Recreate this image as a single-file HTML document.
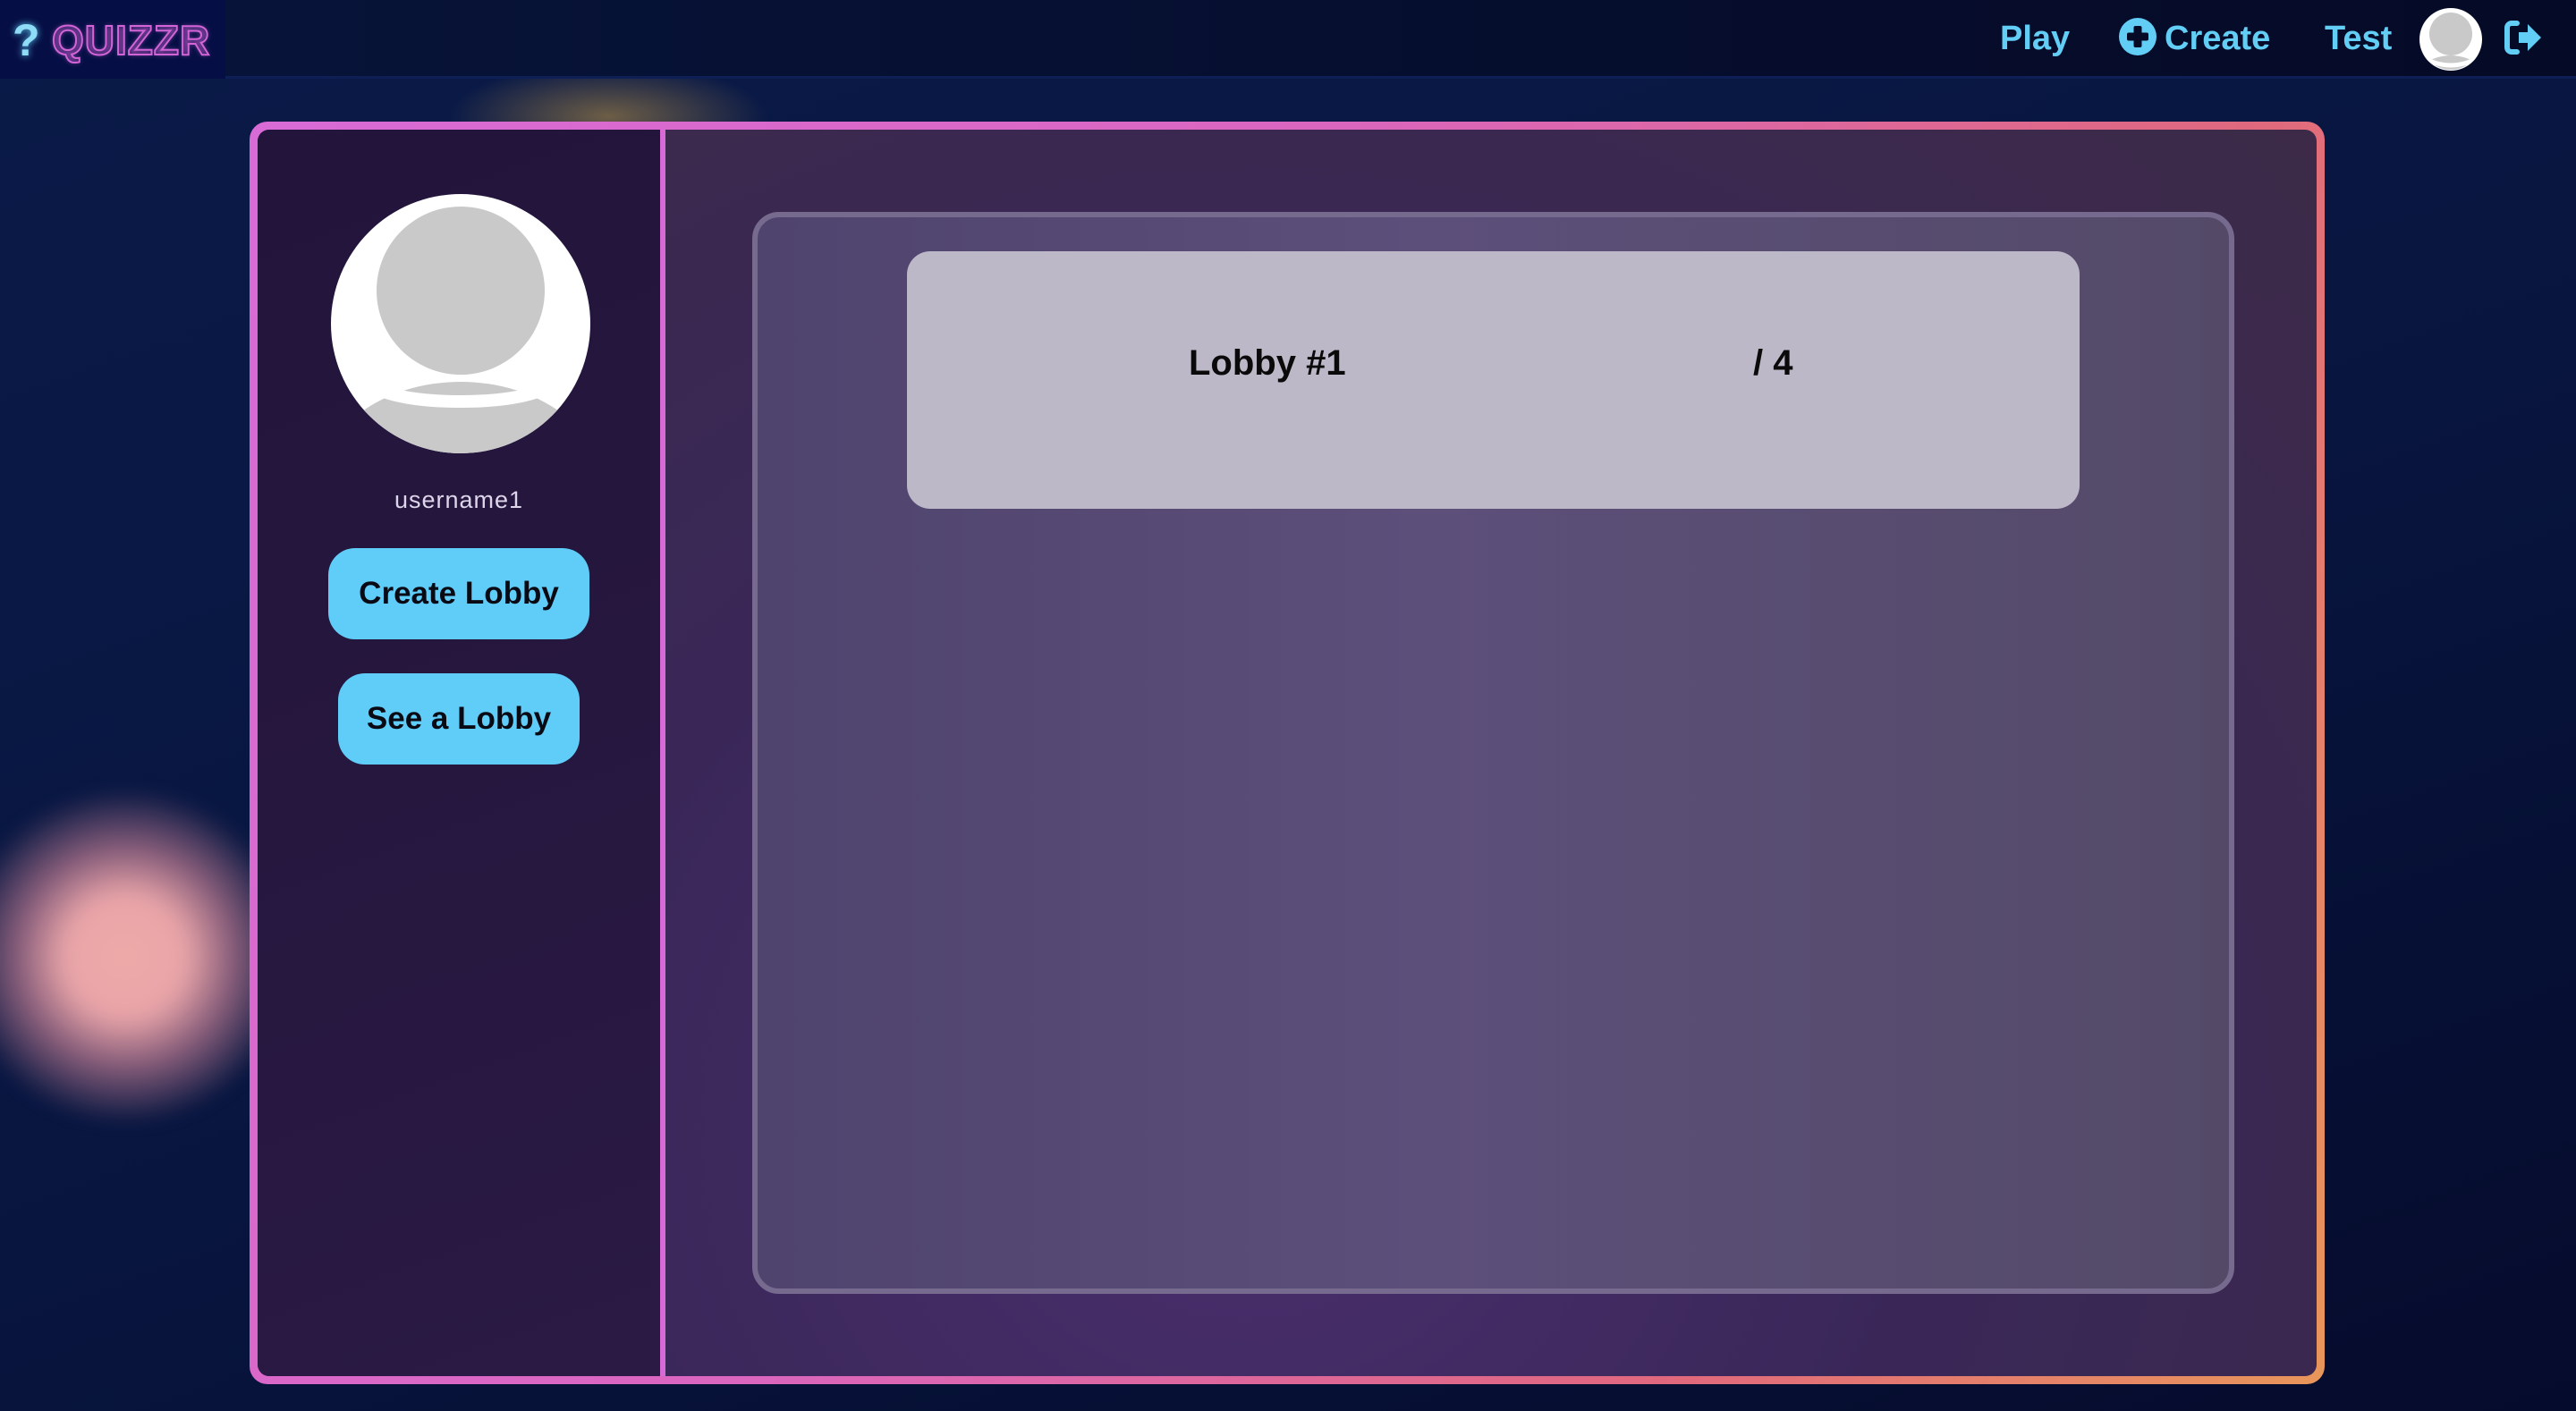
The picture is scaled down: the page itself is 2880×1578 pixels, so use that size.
<!DOCTYPE html>
<html><head><meta charset="utf-8"><style>
*{margin:0;padding:0;box-sizing:border-box}
body{width:2880px;height:1578px;overflow:hidden;font-family:"Liberation Sans",sans-serif;background:linear-gradient(160deg,#0a1a48 0%,#081640 50%,#050b2c 100%);position:relative}
.nav{position:absolute;left:0;top:0;width:2880px;height:88px;background:linear-gradient(90deg,#07143a,#050a26);border-bottom:3px solid #0d1f55}
.logo{position:absolute;left:0;top:0;width:252px;height:88px;background:#060f45}
.q{position:absolute;left:14px;top:16px;font-size:50px;font-weight:bold;color:#8fdcf7;text-shadow:0 0 8px #5cc8f0}
.qz{position:absolute;left:58px;top:18px;font-size:46px;font-weight:bold;color:transparent;-webkit-text-stroke:2px #d264d8;letter-spacing:1px;text-shadow:0 0 6px rgba(210,100,216,.6)}
.nl{position:absolute;top:22px;font-size:38px;font-weight:bold;color:#62cdf5}
.glow{position:absolute;border-radius:50%}
.frame{position:absolute;left:279px;top:136px;width:2320px;height:1412px;border-radius:20px;padding:9px;background:linear-gradient(115deg,#d86bd6 0%,#da66c0 40%,#e0687e 75%,#e8965a 100%);}
.in{position:relative;width:100%;height:100%;border-radius:13px;background:radial-gradient(ellipse at 48% 80%,#4a2f6e 0%,#3a2758 45%,#3c2a48 100%);overflow:hidden}
.side{position:absolute;left:0;top:0;width:456px;height:100%;background:linear-gradient(160deg,#22143a,#2a1a44);border-right:6px solid #d76bd6}
.panel{position:absolute;left:553px;top:92px;width:1657px;height:1210px;border:6px solid #766b8e;border-radius:30px;background:linear-gradient(90deg,#4f446e,#5c4f7a 45%,#544a68)}
.card{position:absolute;left:167px;top:38px;width:1311px;height:288px;background:#bdb8c7;border-radius:26px}
.btn{position:absolute;background:#5fcdf7;border-radius:30px;color:#0a0a14;font-weight:bold;font-size:35px;text-align:center}
</style></head><body>
<div class="glow" style="left:500px;top:70px;width:360px;height:120px;background:radial-gradient(ellipse,rgba(190,150,70,.55),rgba(190,150,70,0) 70%)"></div>
<div class="glow" style="left:-50px;top:880px;width:380px;height:380px;background:radial-gradient(circle,#eeaaa8 0%,#e8a4a8 25%,rgba(220,140,160,.6) 45%,rgba(200,120,150,0) 70%);filter:blur(10px)"></div>
<div class="nav">
<div class="logo"><span class="q">?</span><span class="qz">QUIZZR</span></div>
<span class="nl" style="left:2236px">Play</span>
<svg style="position:absolute;left:2369px;top:20px" width="42" height="42" viewBox="0 0 42 42"><circle cx="21" cy="21" r="21" fill="#62cdf5"/><rect x="16.5" y="9" width="9" height="24" rx="2" fill="#050a26"/><rect x="9" y="16.5" width="24" height="9" rx="2" fill="#050a26"/></svg>
<span class="nl" style="left:2420px">Create</span>
<span class="nl" style="left:2599px">Test</span>
<svg style="position:absolute;left:2704px;top:8px" width="72" height="72" viewBox="0 0 72 72"><defs><clipPath id="c1"><circle cx="36" cy="36" r="34"/></clipPath></defs><circle cx="36" cy="36" r="35" fill="#fff"/><g clip-path="url(#c1)"><circle cx="36" cy="30" r="24" fill="#c9c9c9"/><ellipse cx="36" cy="84" rx="40" ry="30" fill="#c9c9c9"/><path d="M4 56 Q36 74 68 56" stroke="#fff" stroke-width="5" fill="none"/></g></svg>
<svg style="position:absolute;left:2800px;top:22px" width="44" height="40" viewBox="0 0 44 40"><path d="M14 4H8a5 5 0 0 0-5 5v22a5 5 0 0 0 5 5h6" stroke="#62cdf5" stroke-width="6" fill="none" stroke-linecap="round"/><path d="M16 14h10V5l15 15-15 15v-9H16z" fill="#62cdf5"/></svg>
</div>
<div class="frame"><div class="in">
<div class="side">
<svg style="position:absolute;left:82px;top:72px" width="290" height="290" viewBox="0 0 290 290"><defs><clipPath id="c2"><circle cx="145" cy="145" r="145"/></clipPath></defs><circle cx="145" cy="145" r="145" fill="#fff"/><g clip-path="url(#c2)"><circle cx="145" cy="108" r="94" fill="#c9c9c9"/><ellipse cx="145" cy="330" rx="160" ry="120" fill="#c9c9c9"/><path d="M30 205 Q60 232 145 232 Q230 232 260 205" stroke="#fff" stroke-width="14" fill="none"/></g></svg>
<div style="position:absolute;left:0;width:450px;top:399px;text-align:center;color:#ddd6ea;font-size:27px;letter-spacing:1px">username1</div>
<div class="btn" style="left:79px;top:468px;width:292px;height:102px;line-height:102px">Create Lobby</div>
<div class="btn" style="left:90px;top:608px;width:270px;height:102px;line-height:102px">See a Lobby</div>
</div>
<div class="panel"><div class="card">
<div style="position:absolute;left:315px;top:103px;font-size:40px;font-weight:bold;color:#0a0a0a">Lobby #1</div>
<div style="position:absolute;left:946px;top:103px;font-size:40px;font-weight:bold;color:#0a0a0a">/ 4</div>
</div></div>
</div></div>
</body></html>
